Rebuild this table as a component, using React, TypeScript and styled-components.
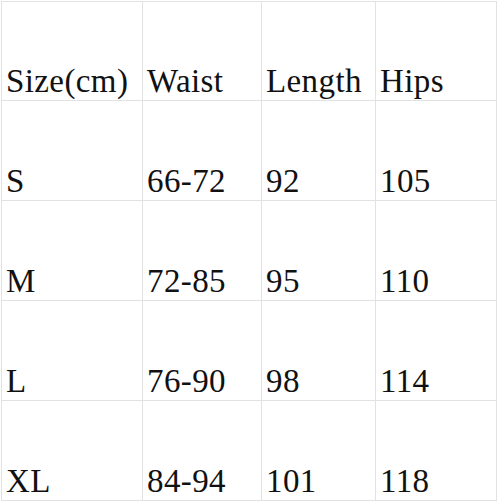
import React from 'react';
import styled, { createGlobalStyle } from 'styled-components';

const GlobalStyle = createGlobalStyle`
  html, body {
    margin: 0;
    padding: 0;
    background: #ffffff;
  }
`;

const header = ['Size(cm)', 'Waist', 'Length', 'Hips'];

const rows = [
  ['S', '66-72', '92', '105'],
  ['M', '72-85', '95', '110'],
  ['L', '76-90', '98', '114'],
  ['XL', '84-94', '101', '118'],
];

const App = () => {
  return (
    <>
      <GlobalStyle />
      <Page>
        <SizeGrid>
          {header.map((label) => (
            <Cell key={label}>{label}</Cell>
          ))}
          {rows.map((row) =>
            row.map((value, i) => <Cell key={row[0] + i}>{value}</Cell>)
          )}
        </SizeGrid>
      </Page>
    </>
  );
};

export default App;

const Page = styled.div`
  padding: 1px 0 0 1px;
  width: 498px;
  height: 501px;
  box-sizing: border-box;
`;

const SizeGrid = styled.div`
  display: grid;
  grid-template-columns: 140px 118px 113px 120px;
  grid-template-rows: 98px repeat(4, 99px);
  gap: 1px;
  padding: 1px;
  width: max-content;
  background: #e2e2e2;
`;

const Cell = styled.div`
  display: flex;
  align-items: flex-end;
  background: #ffffff;
  padding: 0 0 2px 4px;
  font-family: 'Liberation Serif', 'Times New Roman', serif;
  font-size: 33px;
  line-height: 33px;
  letter-spacing: 0.4px;
  color: #111111;
  white-space: nowrap;
`;
